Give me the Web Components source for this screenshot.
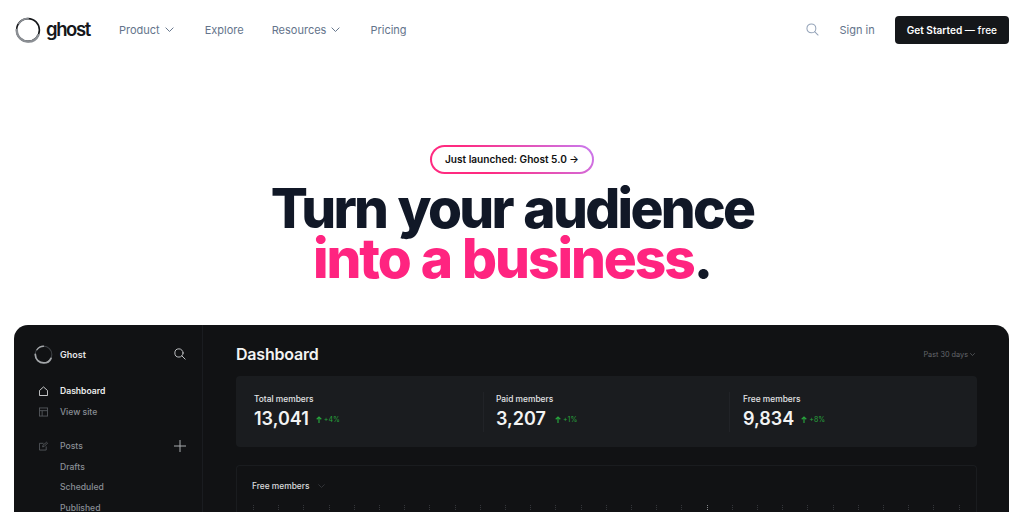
<!DOCTYPE html>
<html lang="en">
<head>
<meta charset="utf-8">
<title>Ghost</title>
<style>
  html, body { margin: 0; height: 512px; overflow: hidden; background: #fff; font-family: Inter, "Liberation Sans", sans-serif; }
</style>
</head>
<body>
<ghost-page>
  <site-nav></site-nav>
  <hero-banner></hero-banner>
  <dash-panel></dash-panel>
</ghost-page>

<script>
const ringSvg = (size, color1, color2) => `
  <svg width="${size}" height="${size}" viewBox="0 0 26 26" fill="none">
    <circle cx="13" cy="13" r="11.4" stroke="${color1}" stroke-width="1.6"/>
    <path d="M1.800 13C1.800 20 7 24.600 13.500 24.600c4.500 0 8-2.400 9.800-6.400" stroke="${color2}" stroke-width="2.400" stroke-linecap="round"/>
    <path d="M4 6.500C6 3.500 9.500 1.700 13 1.700" stroke="${color2}" stroke-width="1.800" stroke-linecap="round"/>
  </svg>`;

const searchSvg = (size, color) => `
  <svg width="${size}" height="${size}" viewBox="0 0 14 14" fill="none" stroke="${color}" stroke-width="1.100" stroke-linecap="round">
    <circle cx="5.800" cy="5.800" r="4.800"/><path d="M9.300 9.300L13 13"/>
  </svg>`;

const chevron = (color, w = 9) => `
  <svg width="${w}" height="${w * 0.6}" viewBox="0 0 10 6" fill="none" stroke="${color}" stroke-width="1.100" stroke-linecap="round" stroke-linejoin="round">
    <path d="M1 1l4 4 4-4"/>
  </svg>`;

class GhostPage extends HTMLElement {
  constructor() {
    super();
    this.attachShadow({ mode: "open" }).innerHTML = `
      <style>
        :host { display: flex; flex-direction: column; height: 512px; overflow: hidden; }
      </style>
      <slot></slot>`;
  }
}

class SiteNav extends HTMLElement {
  constructor() {
    super();
    this.attachShadow({ mode: "open" }).innerHTML = `
      <style>
        :host { display: flex; align-items: center; height: 60px; padding: 0 15px; font-size: 11px; color: #64748b; }
        .logo { display: flex; align-items: center; gap: 5px; width: 104px; }
        .logo b { font: 600 18.500px/1 Inter, sans-serif; color: #15171a; letter-spacing: -1.400px; position: relative; top: -1px; }
        .links { display: flex; align-items: center; gap: 31px; margin-top: -1px; }
        .links span { display: flex; align-items: center; gap: 5px; }
        .links .tight { margin-left: -3px; }
        .links .last { margin-left: -1px; }
        .right { margin-left: auto; display: flex; align-items: center; margin-top: -1px; }
        .right svg { margin-right: 21px; }
        .signin { margin-right: 20px; }
        .cta { display: block; background: #15171a; color: #fff; font-weight: 600; font-size: 10.100px; height: 28px; line-height: 28px; padding: 0 12px; border-radius: 4px; }
        .cta i { font-style: normal; font-weight: 500; }
      </style>
      <div class="logo">${ringSvg(26, "#15171a", "#8b8f94")}<b>ghost</b></div>
      <div class="links">
        <span>Product ${chevron("#64748b")}</span>
        <span>Explore</span>
        <span class="tight">Resources ${chevron("#64748b")}</span>
        <span class="last">Pricing</span>
      </div>
      <div class="right">
        ${searchSvg(13, "#94a3b8")}
        <span class="signin">Sign in</span>
        <span class="cta">Get Started <i>— free</i></span>
      </div>`;
  }
}

class HeroBanner extends HTMLElement {
  constructor() {
    super();
    this.attachShadow({ mode: "open" }).innerHTML = `
      <style>
        :host { display: flex; flex-direction: column; align-items: center; padding-top: 85px; height: 180px; color: #111827; }
        .pill { padding: 2px; border-radius: 15px; background: linear-gradient(45deg, #ff2a80 30%, #c87bf0 100%); }
        .pill span { display: block; background: #fff; border-radius: 13px; height: 25px; line-height: 25px; padding: 0 13.500px; font-size: 10.100px; font-weight: 600; color: #111; }
        h1 { margin: 9px 0 0; font-size: 55px; line-height: 50px; font-weight: 800; letter-spacing: -2.050px; word-spacing: 1px; text-align: center; }
        .first { letter-spacing: -2.700px; word-spacing: 2px; }
        em { font-style: normal; color: #ff2480; }
      </style>
      <div class="pill"><span>Just launched: Ghost 5.0 →</span></div>
      <h1><span class="first">Turn your audience</span><br><em>into a business</em>.</h1>`;
  }
}

class SideNav extends HTMLElement {
  constructor() {
    super();
    this.attachShadow({ mode: "open" }).innerHTML = `
      <style>
        :host { display: block; width: 189px; box-sizing: border-box; height: 100%; border-right: 1px solid #1a1c20; padding: 19px 16px 0 20px; color: #8a8f96; font-size: 8.600px; font-weight: 500; }
        .brand { display: flex; align-items: center; height: 20px; color: #e4e5e7; font-weight: 600; font-size: 9px; }
        .brand span { margin-left: 7px; }
        .brand svg:last-child { margin-left: auto; }
        .row { display: flex; align-items: center; height: 20.500px; padding-left: 5px; }
        .row svg:first-child { width: 9px; height: 10px; margin-right: 12px; flex: none; }
        .row.on { color: #eceded; font-weight: 600; margin-top: 17px; }
        .row.sub { padding-left: 26px; }
        .row.gap { margin-top: 14px; }
        .row .plus { margin-left: auto; }
      </style>
      <div class="brand">${ringSvg(19, "#3b3e42", "#a3a6a9")}<span>Ghost</span>${searchSvg(12, "#c7c9cb")}</div>
      <div class="row on">
        <svg viewBox="0 0 10 11" fill="none" stroke="#d9dadb" stroke-width="1"><path d="M.5 5L5 1l4.500 4v5.500h-9z"/></svg>Dashboard
      </div>
      <div class="row">
        <svg viewBox="0 0 10 10" fill="none" stroke="#55585c" stroke-width="1"><rect x=".5" y=".5" width="9" height="9"/><path d="M.5 3.500h9M3.500 3.500v6"/></svg>View site
      </div>
      <div class="row gap">
        <svg viewBox="0 0 10 10" fill="none" stroke="#55585c" stroke-width="1"><path d="M8 5.500v4H.5V2H5M4 6l.5-2L8.500.8l1 1L5.800 5.500z"/></svg>Posts
        <svg class="plus" width="12" height="12" viewBox="0 0 12 12" stroke="#a8abae" stroke-width="1"><path d="M6 0v12M0 6h12"/></svg>
      </div>
      <div class="row sub">Drafts</div>
      <div class="row sub">Scheduled</div>
      <div class="row sub">Published</div>`;
  }
}

class StatCell extends HTMLElement {
  constructor() {
    super();
    const label = this.getAttribute("label");
    const value = this.getAttribute("value");
    const delta = this.getAttribute("delta");
    this.attachShadow({ mode: "open" }).innerHTML = `
      <style>
        :host { display: block; }
        .label { font-size: 8.400px; font-weight: 500; line-height: 11px; color: #e4e5e7; padding-top: 2px; }
        .line { display: flex; align-items: center; margin-top: 1px; height: 24px; }
        .value { font-size: 18px; font-weight: 600; color: #f2f3f3; }
        .delta { display: flex; align-items: center; gap: 2px; margin-left: var(--delta-gap, 7px); margin-top: 3px; font-size: 7px; color: #27a33c; }
      </style>
      <div class="label">${label}</div>
      <div class="line">
        <span class="value">${value}</span>
        <span class="delta">
          <svg width="6" height="7" viewBox="0 0 6 7" fill="none" stroke="#27a33c" stroke-width="1.200"><path d="M3 7V1M.7 3.200L3 1l2.300 2.200"/></svg>${delta}
        </span>
      </div>`;
  }
}

class DashPanel extends HTMLElement {
  constructor() {
    super();
    const ticks = Array.from({ length: 29 }, (_, i) => `<i class="${i === 18 ? "hi" : ""}"></i>`).join("");
    this.attachShadow({ mode: "open" }).innerHTML = `
      <style>
        :host { display: flex; margin: 0 15px 0 14px; height: 187px; background: #111214; border-radius: 14px 14px 0 0; overflow: hidden; color: #fff; }
        main { flex: 1; padding: 18px 32px 0 33px; min-width: 0; }
        header { display: flex; justify-content: space-between; align-items: center; height: 22px; }
        h2 { margin: 0; font-size: 16px; font-weight: 600; letter-spacing: -0.2px; color: #f2f3f3; }
        .range { display: flex; align-items: center; gap: 2px; font-size: 7.300px; color: #63666b; margin-right: 2px; }
        .stats { display: grid; grid-template-columns: 247px 246px 1fr; margin-top: 11px; height: 71px; background: #1a1c1f; border-radius: 4px; padding: 16px 0 0 0; box-sizing: border-box; }
        stat-cell { padding-left: 18px; height: 40px; }
        stat-cell + stat-cell { border-left: 1px solid #212327; padding-left: 13px; }
        stat-cell.paid { padding-left: 12px; }
        .chart { margin-top: 18px; height: 80px; border: 1px solid #1a1c1f; border-bottom: 0; border-radius: 4px 4px 0 0; padding: 14px 15px 0; box-sizing: border-box; }
        .chart-title { display: flex; align-items: center; gap: 8px; font-size: 8.400px; font-weight: 500; line-height: 12px; color: #dcdddf; }
        .ticks { display: flex; justify-content: space-between; margin-top: 13px; padding: 0 1px; }
        .ticks i { width: 1px; height: 6px; background: repeating-linear-gradient(#34363a 0 1px, transparent 1px 2px); }
        .ticks i.hi { background: repeating-linear-gradient(#85878a 0 1px, transparent 1px 2px); }
      </style>
      <side-nav></side-nav>
      <main>
        <header>
          <h2>Dashboard</h2>
          <span class="range">Past 30 days ${chevron("#7a7d82", 5)}</span>
        </header>
        <section class="stats">
          <stat-cell label="Total members" value="13,041" delta="+4%"></stat-cell>
          <stat-cell class="paid" label="Paid members" value="3,207" delta="+1%" style="--delta-gap:9px"></stat-cell>
          <stat-cell label="Free members" value="9,834" delta="+8%"></stat-cell>
        </section>
        <section class="chart">
          <div class="chart-title">Free members ${chevron("#3d4044", 7)}</div>
          <div class="ticks">${ticks}</div>
        </section>
      </main>`;
  }
}

customElements.define("ghost-page", GhostPage);
customElements.define("site-nav", SiteNav);
customElements.define("hero-banner", HeroBanner);
customElements.define("side-nav", SideNav);
customElements.define("stat-cell", StatCell);
customElements.define("dash-panel", DashPanel);
</script>
</body>
</html>
